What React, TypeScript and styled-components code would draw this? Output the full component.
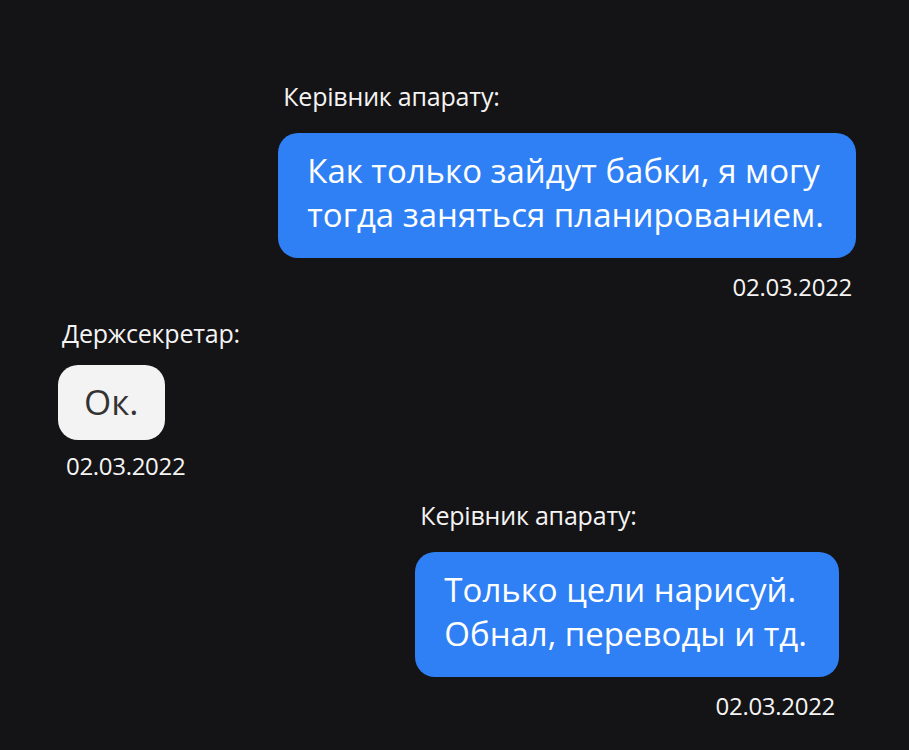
import React from "react";
import styled, { createGlobalStyle } from "styled-components";

const GlobalStyle = createGlobalStyle`
  html, body {
    margin: 0;
    padding: 0;
    background: #141315;
  }
`;

type Side = "left" | "right";

interface Message {
  author: string;
  lines: string[];
  date: string;
  side: Side;
  gapTop: number;
  inset: number;
}

const messages: Message[] = [
  {
    author: "Керівник апарату:",
    lines: ["Как только зайдут бабки, я могу", "тогда заняться планированием."],
    date: "02.03.2022",
    side: "right",
    gapTop: 81,
    inset: 53,
  },
  {
    author: "Держсекретар:",
    lines: ["Ок."],
    date: "02.03.2022",
    side: "left",
    gapTop: 17,
    inset: 58,
  },
  {
    author: "Керівник апарату:",
    lines: ["Только цели нарисуй.", "Обнал, переводы и тд."],
    date: "02.03.2022",
    side: "right",
    gapTop: 20,
    inset: 70,
  },
];

function App() {
  return (
    <>
      <GlobalStyle />
      <Screen>
        {messages.map((m, i) => (
          <Group key={i} $side={m.side} $gapTop={m.gapTop} $inset={m.inset}>
            <Author $side={m.side}>{m.author}</Author>
            <Bubble $side={m.side}>
              {m.lines.map((line, j) => (
                <Line key={j}>{line}</Line>
              ))}
            </Bubble>
            <Stamp $side={m.side}>{m.date}</Stamp>
          </Group>
        ))}
      </Screen>
    </>
  );
}

export default App;

const Screen = styled.div`
  width: 909px;
  height: 750px;
  background: #141315;
  display: flex;
  flex-direction: column;
  overflow: hidden;
`;

const Group = styled.div<{ $side: Side; $gapTop: number; $inset: number }>`
  display: flex;
  flex-direction: column;
  align-self: ${(p) => (p.$side === "right" ? "flex-end" : "flex-start")};
  margin-top: ${(p) => p.$gapTop}px;
  ${(p) => (p.$side === "right" ? `margin-right: ${p.$inset}px;` : `margin-left: ${p.$inset}px;`)}
`;

const Author = styled.div<{ $side: Side }>`
  font-family: "Open Sans", "Noto Sans", sans-serif;
  font-size: 25px;
  line-height: 30px;
  color: #f4f4f4;
  letter-spacing: -0.2px;
  padding-left: ${(p) => (p.$side === "right" ? "5px" : "4px")};
  white-space: nowrap;
`;

// outgoing bubbles are blue and stretch to the group, the reply hugs its text
const Bubble = styled.div<{ $side: Side }>`
  align-self: ${(p) => (p.$side === "right" ? "stretch" : "flex-start")};
  margin-top: ${(p) => (p.$side === "right" ? "22px" : "17px")};
  border-radius: 20px;
  padding: ${(p) => (p.$side === "right" ? "16px 32px 21px 29px" : "15px 26px 16px 26px")};
  background: ${(p) => (p.$side === "right" ? "#2f80f5" : "#f3f3f3")};
  color: ${(p) => (p.$side === "right" ? "#ffffff" : "#333333")};
  font-family: "Open Sans", "Noto Sans", sans-serif;
  font-size: ${(p) => (p.$side === "right" ? "33px" : "35px")};
  line-height: 44px;
`;

const Line = styled.div`
  white-space: nowrap;
`;

const Stamp = styled.div<{ $side: Side }>`
  margin-top: ${(p) => (p.$side === "right" ? "15px" : "12px")};
  font-family: "Open Sans", "Noto Sans", sans-serif;
  font-size: 24px;
  line-height: 28px;
  color: #f4f4f4;
  letter-spacing: -0.3px;
  text-align: ${(p) => (p.$side === "right" ? "right" : "left")};
  padding-left: ${(p) => (p.$side === "right" ? "0" : "8px")};
  padding-right: ${(p) => (p.$side === "right" ? "4px" : "0")};
`;
